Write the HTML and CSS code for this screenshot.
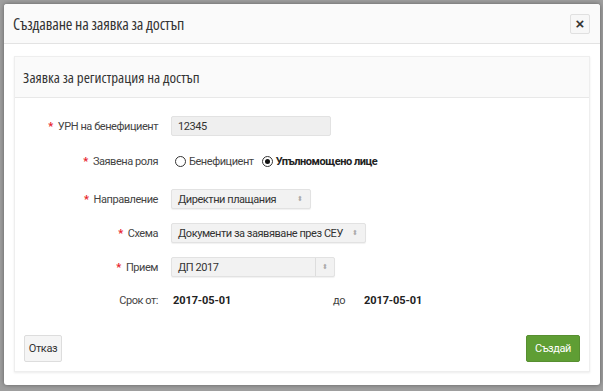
FILE: index.html
```html
<!DOCTYPE html>
<html lang="bg">
<head>
    <meta charset="UTF-8">
    <title>Създаване на заявка за достъп</title>
    <link rel="stylesheet" href="styles.css">
</head>
<body>
    <div class="backdrop">
        <div class="modal">
            <div class="modal-header">
                <span class="modal-title">Създаване на заявка за достъп</span>
                <button class="close-btn">×</button>
            </div>
            <div class="modal-body">
                <div class="panel">
                    <div class="panel-heading">Заявка за регистрация на достъп</div>
                    <div class="panel-body">
                        <div class="form-row">
                            <label class="form-label required">УРН на бенефициент</label>
                            <div class="input w-urn">12345</div>
                        </div>
                        <div class="form-row row-radio">
                            <label class="form-label required">Заявена роля</label>
                            <div class="radios">
                                <span class="radio"><span class="dot"></span>Бенефициент</span>
                                <span class="radio checked"><span class="dot"></span>Упълномощено лице</span>
                            </div>
                        </div>
                        <div class="form-row">
                            <label class="form-label required">Направление</label>
                            <div class="select w-dir">Директни плащания<span class="arrow">⬍</span></div>
                        </div>
                        <div class="form-row">
                            <label class="form-label required">Схема</label>
                            <div class="select w-scheme">Документи за заявяване през СЕУ<span class="arrow">⬍</span></div>
                        </div>
                        <div class="form-row">
                            <label class="form-label required">Прием</label>
                            <div class="select w-intake">ДП 2017<span class="arrow split">⬍</span></div>
                        </div>
                        <div class="form-row row-dates">
                            <label class="form-label">Срок от:</label>
                            <span class="date">2017-05-01</span>
                            <span class="to-label">до</span>
                            <span class="date">2017-05-01</span>
                        </div>
                    </div>
                    <div class="panel-footer">
                        <button class="btn btn-default">Отказ</button>
                        <button class="btn btn-success">Създай</button>
                    </div>
                </div>
            </div>
        </div>
    </div>
</body>
</html>
```

FILE: styles.css
```css
body {
    margin: 0;
    font-family: Roboto, "Liberation Sans", sans-serif;
    color: #333;
    background: #9e9e9e;
}

.backdrop {
    padding: 4px 3px 6px 4px;
    height: 391px;
    box-sizing: border-box;
}

.modal {
    background: #fff;
    border-radius: 3px;
    box-shadow: 0 0 4px rgba(0, 0, 0, 0.4);
    height: 381px;
    display: flex;
    flex-direction: column;
}

.modal-header {
    height: 40px;
    box-sizing: border-box;
    background: #fafafa;
    border-bottom: 1px solid #e3e3e3;
    border-radius: 3px 3px 0 0;
    display: flex;
    align-items: center;
    justify-content: space-between;
    padding: 0 10px 0 9px;
}

.modal-title {
    font-family: "Open Sans", Roboto, sans-serif;
    font-stretch: 75%;
    font-size: 16px;
    letter-spacing: -0.15px;
    color: #333;
}

.close-btn {
    width: 20px;
    height: 20px;
    padding: 0;
    border: 1px solid #e0e0e0;
    border-radius: 2px;
    background: #f7f7f7;
    font-family: "Liberation Sans", sans-serif;
    font-size: 15px;
    font-weight: bold;
    color: #333;
    line-height: 16px;
}

.modal-body {
    padding: 12px 10px 13px 10px;
    flex: 1;
    display: flex;
}

.panel {
    flex: 1;
    border: 1px solid #eee;
    box-shadow: 0 1px 2px rgba(0, 0, 0, 0.08);
    display: flex;
    flex-direction: column;
}

.panel-heading {
    height: 41px;
    box-sizing: border-box;
    background: #fafafa;
    border-bottom: 1px solid #e8e8e8;
    display: flex;
    align-items: center;
    padding-left: 8px;
    font-family: "Open Sans", Roboto, sans-serif;
    font-stretch: 75%;
    font-size: 15px;
}

.panel-body {
    padding: 18px 0 0 0;
    display: flex;
    flex-direction: column;
    gap: 14px;
    flex: 1;
}

.form-row {
    display: flex;
    align-items: center;
    height: 20px;
    font-size: 11px;
    letter-spacing: -0.45px;
    white-space: nowrap;
}

.row-radio {
    margin: 1px 0 4px;
}

.row-dates {
    margin-top: -1px;
}

.form-label {
    width: 156px;
    text-align: right;
    padding-right: 13px;
    box-sizing: border-box;
    flex-shrink: 0;
    color: #444;
}

.required::before {
    content: "*";
    color: #e8232a;
    font-weight: bold;
    margin-right: 5px;
}

.input,
.select {
    height: 20px;
    box-sizing: border-box;
    background: #efefef;
    border: 1px solid #e2e2e2;
    border-radius: 2px;
    padding-left: 6px;
    display: flex;
    align-items: center;
    position: relative;
    color: #333;
}

.select {
    background: #f2f2f2;
    box-shadow: 0 1px 1px rgba(0, 0, 0, 0.06);
}

.w-urn { width: 160px; }
.w-dir { width: 140px; }
.w-scheme { width: 195px; }
.w-intake { width: 164px; }

.arrow {
    position: absolute;
    right: 7px;
    top: 3px;
    font-size: 7px;
    color: #aaa;
    line-height: 12px;
}

.arrow.split {
    right: 0;
    top: 0;
    width: 18px;
    height: 18px;
    line-height: 18px;
    text-align: center;
    border-left: 1px solid #ddd;
}

.radios {
    display: flex;
    gap: 8px;
    margin-left: 4px;
}

.radio {
    display: flex;
    align-items: center;
    gap: 3px;
    color: #444;
}

.radio .dot {
    width: 9px;
    height: 9px;
    border: 1px solid #333;
    border-radius: 50%;
    display: inline-block;
    position: relative;
}

.radio.checked {
    font-weight: bold;
    color: #222;
}

.radio.checked .dot::after {
    content: "";
    position: absolute;
    left: 2px;
    top: 2px;
    width: 5px;
    height: 5px;
    border-radius: 50%;
    background: #111;
}

.date {
    font-weight: bold;
    width: 160px;
    padding-left: 2px;
    letter-spacing: -0.1px;
    color: #222;
}

.to-label {
    width: 29px;
    color: #444;
}

.panel-footer {
    display: flex;
    justify-content: space-between;
    padding: 0 9px 9px 9px;
}

.btn {
    height: 27px;
    border-radius: 2px;
    font-family: Roboto, "Liberation Sans", sans-serif;
    font-size: 11px;
    letter-spacing: -0.4px;
    padding: 0;
}

.btn-default {
    background: #f5f5f5;
    border: 1px solid #ddd;
    color: #333;
    width: 38px;
}

.btn-success {
    background: #5f9e34;
    border: 1px solid #578f30;
    color: #fff;
    width: 54px;
}
```
